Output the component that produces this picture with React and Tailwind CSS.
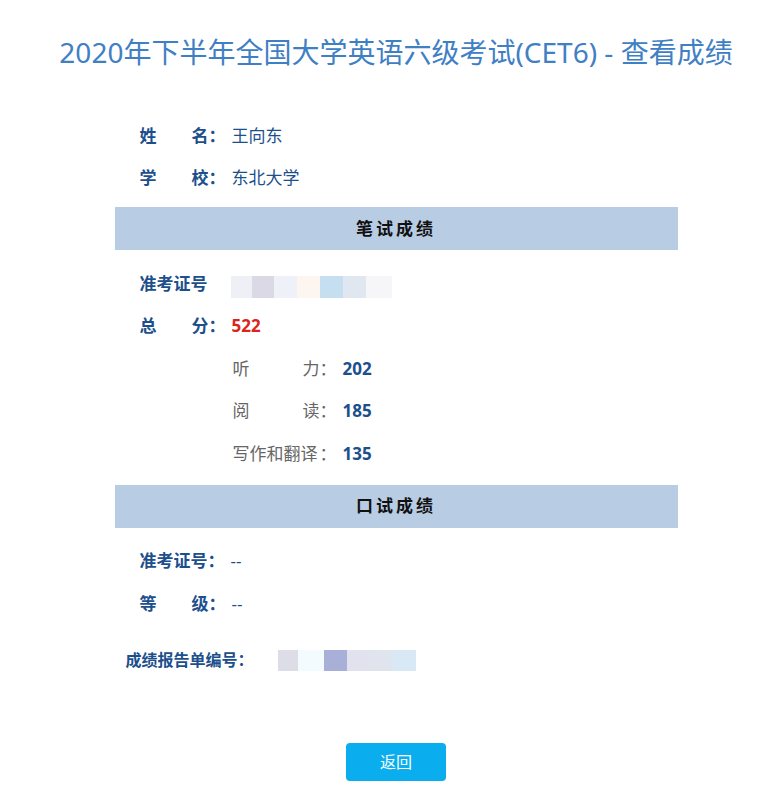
import React from "react";

const font = { fontFamily: '"Noto Sans", "Noto Sans CJK SC", sans-serif' };

function Spread({ chars, w }) {
  return (
    <span className={`flex justify-between ${w}`}>
      {chars.map((c, i) => (
        <span key={i}>{c}</span>
      ))}
    </span>
  );
}

function MainRow({ children }) {
  return <div className="flex h-[42.5px] items-center pl-[25px] text-[17px]">{children}</div>;
}

function Bar({ children }) {
  return (
    <div className="flex h-[43px] items-center justify-center bg-[#b8cce4] text-[17px] font-bold tracking-[3px] text-[#111]">
      {children}
    </div>
  );
}

export default function App() {
  return (
    <div className="min-h-[811px] w-full bg-white pl-[14px]" style={font}>
      <div className="pt-[30px] text-center text-[28px] leading-[44px] text-[#3f80c5]">
        2020年下半年全国大学英语六级考试(CET6)&nbsp;-&nbsp;查看成绩
      </div>
      <div className="mx-auto mt-[40px] w-[563px]">
        <MainRow>
          <span className="flex font-bold text-[#1c4f8c]">
            <Spread chars={["姓", "名"]} w="w-[69px]" />
            <span>：</span>
          </span>
          <span className="ml-[6px] text-[#1c4f8c]">王向东</span>
        </MainRow>
        <MainRow>
          <span className="flex font-bold text-[#1c4f8c]">
            <Spread chars={["学", "校"]} w="w-[69px]" />
            <span>：</span>
          </span>
          <span className="ml-[6px] text-[#1c4f8c]">东北大学</span>
        </MainRow>
        <div className="mt-[8px]">
          <Bar>笔试成绩</Bar>
        </div>
        <div className="mt-[12px]">
          <MainRow>
            <span className="font-bold text-[#1c4f8c]">准考证号</span>
            <span className="ml-[23px] mt-[7px] flex h-[22px]">
              <span className="w-[21px] bg-[#eef0f5]"></span>
              <span className="w-[22px] bg-[#dcd9e6]"></span>
              <span className="w-[23px] bg-[#eef1f8]"></span>
              <span className="w-[23px] bg-[#fdf5f0]"></span>
              <span className="w-[23px] bg-[#c5dff0]"></span>
              <span className="w-[23px] bg-[#e0e7f0]"></span>
              <span className="w-[26px] bg-[#f6f6f8]"></span>
            </span>
          </MainRow>
          <MainRow>
            <span className="flex font-bold text-[#1c4f8c]">
              <Spread chars={["总", "分"]} w="w-[69px]" />
              <span>：</span>
            </span>
            <span className="ml-[6px] font-bold text-[#d9261c]">522</span>
          </MainRow>
          <div className="flex h-[42.5px] items-center pl-[118px] text-[17px]">
            <span className="flex text-[#666]">
              <Spread chars={["听", "力"]} w="w-[87px]" />
              <span>：</span>
            </span>
            <span className="ml-[6px] font-bold text-[#1c4f8c]">202</span>
          </div>
          <div className="flex h-[42.5px] items-center pl-[118px] text-[17px]">
            <span className="flex text-[#666]">
              <Spread chars={["阅", "读"]} w="w-[87px]" />
              <span>：</span>
            </span>
            <span className="ml-[6px] font-bold text-[#1c4f8c]">185</span>
          </div>
          <div className="flex h-[42.5px] items-center pl-[118px] text-[17px]">
            <span className="flex text-[#666]">
              <span className="w-[87px]">写作和翻译</span>
              <span>：</span>
            </span>
            <span className="ml-[6px] font-bold text-[#1c4f8c]">135</span>
          </div>
        </div>
        <div className="mt-[10px]">
          <Bar>口试成绩</Bar>
        </div>
        <div className="mt-[12px]">
          <MainRow>
            <span className="font-bold text-[#1c4f8c]">准考证号：</span>
            <span className="ml-[6px] text-[#1c4f8c]">--</span>
          </MainRow>
          <MainRow>
            <span className="flex font-bold text-[#1c4f8c]">
              <Spread chars={["等", "级"]} w="w-[69px]" />
              <span>：</span>
            </span>
            <span className="ml-[6px] text-[#1c4f8c]">--</span>
          </MainRow>
        </div>
        <div className="mt-[14px] flex h-[43px] items-center pl-[11px] text-[16px]">
          <span className="w-[152px] font-bold text-[#1c4f8c]">成绩报告单编号：</span>
          <span className="flex h-[21px]">
            <span className="w-[20px] bg-[#dcdde6]"></span>
            <span className="w-[26px] bg-[#f4fbfe]"></span>
            <span className="w-[23px] bg-[#a8b0d8]"></span>
            <span className="w-[22px] bg-[#e2e2ee]"></span>
            <span className="w-[23px] bg-[#e0e4ec]"></span>
            <span className="w-[24px] bg-[#d8e8f4]"></span>
          </span>
        </div>
        <div className="mt-[61px] flex justify-center">
          <button className="h-[38px] w-[100px] rounded-[4px] bg-[#0aaeef] text-[16px] text-white">
            返回
          </button>
        </div>
      </div>
    </div>
  );
}
